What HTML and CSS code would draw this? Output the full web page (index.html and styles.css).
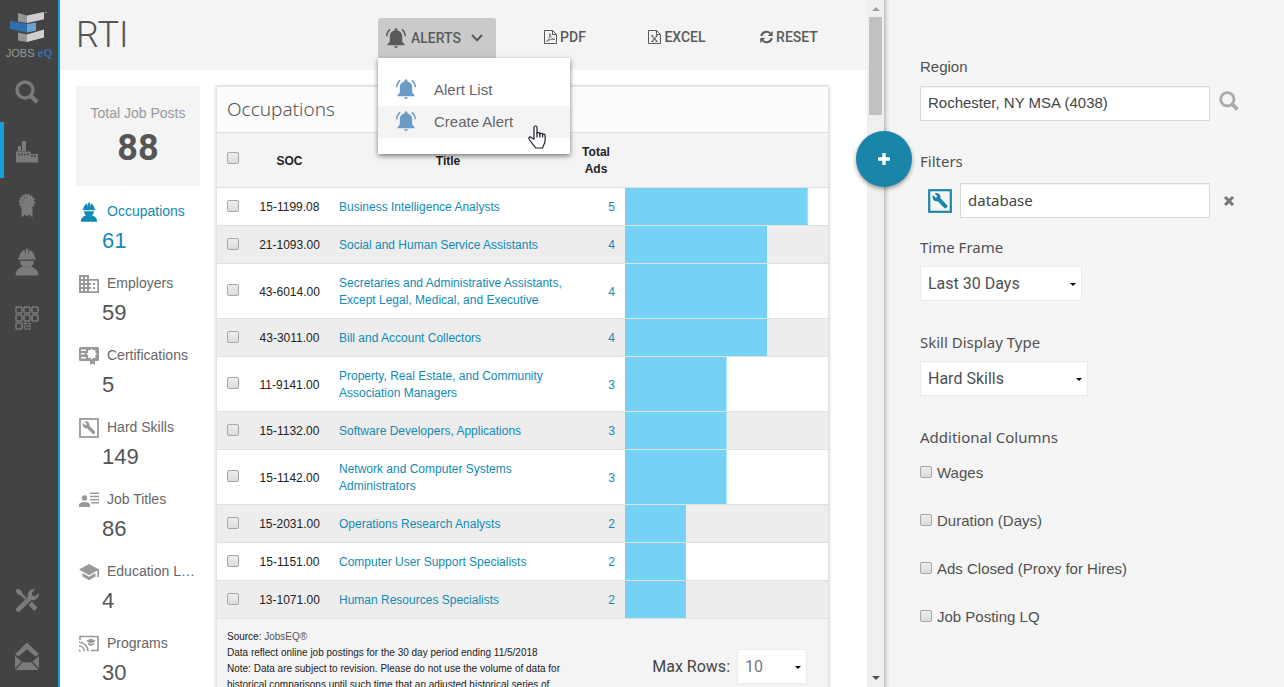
FILE: index.html
```html
<!DOCTYPE html>
<html lang="en">
<head>
<meta charset="utf-8">
<title>RTI</title>
<link rel="stylesheet" href="styles.css">
</head>
<body>
<svg class="defs" aria-hidden="true">
  <symbol id="bell" viewBox="0 0 20 20">
    <path d="M10 .3a1.500 1.500 0 0 1 1.500 1.500v.6c3 .6 4.700 2.900 4.700 5.700v5.400l2.300 2.700v1.100h-17v-1.100l2.300-2.700V8.100c0-2.800 1.700-5.100 4.700-5.700v-.6A1.500 1.500 0 0 1 10 .3zM8 18.300h4c-.2 1-1 1.600-2 1.600s-1.800-.6-2-1.600z" fill="currentColor"/>
    <path d="M4.200 1.300C2 2.900.8 5.500.7 8.300M15.800 1.300c2.200 1.600 3.400 4.200 3.500 7" fill="none" stroke="currentColor" stroke-width="1.500"/>
  </symbol>
  <symbol id="search" viewBox="0 0 24 24">
    <circle cx="10" cy="10" r="8" fill="none" stroke="currentColor" stroke-width="3.400"/>
    <path d="M15.500 15.500l6.700 6.700" stroke="currentColor" stroke-width="4.400"/>
  </symbol>
  <symbol id="worker" viewBox="0 0 24 28">
    <path d="M4 10c.3-4 2.500-7 5.500-8.300L10.300 7 11 .8h2l.7 6.200.8-5.300C17.500 3 19.700 6 20 10h1v1.600H3V10zM5 12.800h14c-.2 4.300-2.800 7-7 7s-6.800-2.700-7-7zM.5 27.500c.3-5 3-7.600 7.300-8.700 2.400 1.600 6 1.600 8.400 0 4.300 1.100 7 3.700 7.300 8.700z" fill="currentColor"/>
  </symbol>
  <symbol id="wrench-box" viewBox="0 0 20 20">
    <rect x="1" y="1" width="18" height="18" fill="none" stroke="currentColor" stroke-width="1.800"/>
    <path d="M4 5l2.500 2.300 1.300-1.200-2.300-2.500c2.800-1 5.600 1.200 4.900 4.200l5.800 5.900c.7.800-1.600 3.100-2.400 2.300L8.100 10.200C5.200 10.900 3 8 4 5z" fill="currentColor"/>
  </symbol>
</svg>

<div class="app">
  <nav class="nav" aria-label="Main">
    <a class="logo" href="#">
      <svg width="58" height="34" viewBox="0 10 58 34" aria-hidden="true">
        <path d="M18 13l9 2.500V23l-9-1.600z" fill="#969696"/><path d="M27 15.500L44 12v7.200L27 23z" fill="#cfcfcf"/>
        <path d="M10 20.700l17 3.300v8.500L10 29z" fill="#2f6fae"/><path d="M27 24l9-1.500v8.300l-9 1.700z" fill="#6a9fcf"/>
        <path d="M18 32.500l9 2V42l-9-1.600z" fill="#969696"/><path d="M27 34.500L44 29.500v8L27 42z" fill="#cfcfcf"/>
        <path d="M45 12h2v1h-2z" fill="#999"/>
      </svg>
      <span class="wordmark">JOBS <b>eQ</b></span>
    </a>
    <a class="nav-item" href="#" aria-label="Search"><svg width="24" height="24"><use href="#search"/></svg></a>
    <a class="nav-item active" href="#" aria-label="Industry">
      <svg width="24" height="24" viewBox="0 0 24 24"><path d="M3 7h3v5H3zM7 2h4v10H7zM1 12.500h14.500V15H23v7.500h.5v1H.5v-1H1z" fill="currentColor"/><path d="M3 15.500h11M16 17h6" stroke="#434343" stroke-width="1.500" stroke-dasharray="2 1"/></svg></a>
    <a class="nav-item" href="#" aria-label="Certification">
      <svg width="24" height="26" viewBox="0 0 24 26"><path d="M6.500 15v9.500l3.500-3 2 2 2-2 3.500 3V15z" fill="currentColor"/><circle cx="12" cy="9" r="7" fill="currentColor" /><circle cx="12" cy="9" r="7.300" fill="none" stroke="currentColor" stroke-width="1.800" stroke-dasharray="2 1.200"/><path d="M7.500 10a4.500 4.500 0 0 1 5-5.500" fill="none" stroke="#555" stroke-width=".8"/></svg></a>
    <a class="nav-item" href="#" aria-label="Occupations"><svg width="24" height="28"><use href="#worker"/></svg></a>
    <a class="nav-item" href="#" aria-label="Programs">
      <svg width="24" height="24" viewBox="0 0 24 24" fill="none" stroke="currentColor" stroke-width="1.500"><rect x="1" y="1" width="6" height="6" rx="1"/><rect x="9" y="1" width="6" height="6" rx="1"/><rect x="17" y="1" width="6" height="6" rx="1"/><rect x="1" y="9" width="6" height="6" rx="1"/><rect x="9" y="9" width="6" height="6" rx="1"/><rect x="17" y="9" width="6" height="6" rx="1"/><rect x="1" y="17" width="6" height="6" rx="1"/><rect x="9.500" y="17.500" width="5.500" height="5.500" stroke-dasharray="2.500 1"/><path d="M11.500 20.200h1.800"/></svg></a>
    <a class="nav-item last" href="#" aria-label="Tools">
      <svg width="24" height="24" viewBox="0 0 24 24"><path d="M.5 2.500l2-2 4 2.200.8 2.800 4.200 4.200-1.800 1.800-4.200-4.200-2.800-.8zM13.500 17l3.300-3.300 5.700 5.800-3.200 3.500zM1 20.500L13 9c-1-4.500 2.500-8.800 7.300-7.800l-3.500 3.500.7 2.800 2.900.7 3.400-3.400c.8 4.500-3 8.300-7.500 7.400L4.300 23.800C3 25-.3 22 1 20.500z" fill="currentColor"/></svg></a>
    <a class="nav-item" href="#" aria-label="Messages">
      <svg width="24" height="28" viewBox="0 0 24 28"><path d="M12 .5l12 11.800-3.500 2.200L12 7.200l-8.500 7.300L0 12.300zM0 14l6.500 5.500L0 26.500zM24 14v12.500l-6.500-7zM7.500 20.300h9L23.500 28H.5z" fill="currentColor"/></svg></a>
  </nav>

  <main class="main">
    <header class="toolbar">
      <h1>RTI</h1>
      <div class="alerts">
        <button class="tool alerts-button" type="button" aria-expanded="true"><svg width="20" height="20"><use href="#bell"/></svg>ALERTS<svg class="chevron" width="12" height="8" viewBox="0 0 12 8"><path d="M1 1l5 5.200L11 1" fill="none" stroke="currentColor" stroke-width="2"/></svg></button>
        <div class="menu">
          <button type="button"><svg width="20" height="20"><use href="#bell"/></svg>Alert List</button>
          <button type="button" class="hover"><svg width="20" height="20"><use href="#bell"/></svg>Create Alert</button>
          <svg class="cursor" width="18" height="24" viewBox="0 0 18 24"><path d="M6 14V2.800c0-2.400 3-2.400 3 0V8.500c.2-1.300 2.600-1.300 2.900.4.400-1.100 2.500-.9 2.700.7.600-.9 2.500-.6 2.500 1.200v5c0 3.400-2 4.100-2.500 7.200H7.500C7 20.500 2.500 17.700 1 13.900c-.6-1.700 1.200-2.600 2.500-1.200z" fill="#fff" stroke="#1c1c2c" stroke-width="1.200"/><path d="M9 8v4.500M11.900 8.500v4M14.600 9.500v3" stroke="#1c1c2c" stroke-width="1.200"/></svg>
        </div>
      </div>
      <div class="tools">
        <button class="tool" type="button"><svg width="13" height="14" viewBox="0 0 13 14" fill="none" stroke="currentColor"><path d="M.5.5h8l4 4v9H.5zM8.500.5v4h4"/><path d="M2.500 11.500C5 10 6 7 5.700 3.500c2 5 3 6 5.300 5.800-3-.3-5.500.200-8.500 2.200z" stroke-width=".8"/></svg>PDF</button>
        <button class="tool" type="button"><svg width="13" height="14" viewBox="0 0 13 14" fill="none" stroke="currentColor"><path d="M.5.500h8l4 4v9H.5zM8.500.5v4h4"/><path d="M4 6l5 5.500M9 6l-5 5.500M3.200 5.800h2M7.800 5.800h2M3.200 11.500h2M7.800 11.500h2" stroke-width="1.100"/></svg>EXCEL</button>
        <button class="tool" type="button"><svg width="13" height="14" viewBox="0 0 13 14"><path d="M1.300 6C2 1.600 7.500.5 10.200 3.400M11.700 8C11 12.400 5.500 13.500 2.800 10.600" fill="none" stroke="currentColor" stroke-width="2"/><path d="M12.700 1v5H7.800zM.3 13V8h4.900z" fill="currentColor"/></svg>RESET</button>
      </div>
    </header>

    <div class="content">
      <aside class="stats">
        <div class="total"><span>Total Job Posts</span><strong>88</strong></div>
        <a class="stat current" href="#"><svg width="20" height="20"><use href="#worker"/></svg><span>Occupations</span><b>61</b></a>
        <a class="stat" href="#"><svg width="20" height="20" viewBox="0 0 20 20"><path fill-rule="evenodd" d="M0 1h10v4h10v14H0zM2 3v2h2V3zM6 3v2h2V3zM2 7v2h2V7zM6 7v2h2V7zM2 11v2h2v-2zM6 11v2h2v-2zM2 15v2h2v-2zM6 15v2h2v-2zM10 6.700V9h2v2h-2v2h2v2h-2v2.300h8.300V6.700zM14 9h2v2h-2zM14 13h2v2h-2z" fill="currentColor"/></svg><span>Employers</span><b>59</b></a>
        <a class="stat" href="#"><svg width="20" height="20" viewBox="0 0 20 20"><path fill-rule="evenodd" d="M1.500 1h17q1.500 0 1.500 1.500v11q0 1.500-1.500 1.500H16v4l-2.500-1.500L11 19v-4H1.500Q0 15 0 13.500v-11Q0 1 1.500 1zM12.700 2.500l-1.500 1.700-2.300-.1.300 2.300L7.500 8l1.700 1.600-.3 2.300 2.300-.1 1.500 1.700 1.500-1.700 2.300.1-.3-2.300L18 8l-1.800-1.600.3-2.300-2.300.1zM2 3.500V5h5V3.500zM2 7v1.500h3.500V7zM2 11v1.500h5V11z" fill="currentColor"/></svg><span>Certifications</span><b>5</b></a>
        <a class="stat" href="#"><svg width="20" height="20"><use href="#wrench-box"/></svg><span>Hard Skills</span><b>149</b></a>
        <a class="stat" href="#"><svg width="20" height="20" viewBox="0 0 20 20"><circle cx="5.500" cy="8" r="2.700" fill="currentColor"/><path d="M0 17v-1.800C0 12.900 2.500 12 5.500 12s5.500.9 5.500 3.200V17zM11 2.500h9V4h-9zM11 5.800h9v1.500h-9zM11 9h9v1.500h-9zM12 12h8v1.500h-8z" fill="currentColor"/></svg><span>Job Titles</span><b>86</b></a>
        <a class="stat" href="#"><svg width="20" height="20" viewBox="0 0 20 20"><path d="M0 7.500L10 2l10 5.500V15h-1.700V8.600L10 13.200zM3.500 11l6.500 3.700 6.500-3.700v3.500L10 18.200l-6.500-3.700z" fill="currentColor"/></svg><span>Education L…</span><b>4</b></a>
        <a class="stat" href="#"><svg width="20" height="20" viewBox="0 0 20 20"><path d="M1 6V2.500h18v14h-7" fill="none" stroke="currentColor" stroke-width="1.600"/><path d="M0 8.300c5 0 9 4 9 9M0 12c3 0 5.300 2.300 5.300 5.300" fill="none" stroke="currentColor" stroke-width="1.500"/><path d="M0 15l2.500 2.500H0zM7 7l5-2.500L17 7l-5 2.500zM9 8.700l3 1.500 3-1.500v1.800L12 12l-3-1.500z" fill="currentColor"/></svg><span>Programs</span><b>30</b></a>
      </aside>

      <section class="card">
        <h2>Occupations</h2>
        <table>
          <colgroup><col class="c-check"><col class="c-soc"><col class="c-title"><col class="c-ads"><col></colgroup>
          <thead><tr><th><input type="checkbox" aria-label="Select all"></th><th>SOC</th><th>Title</th><th>Total Ads</th><th></th></tr></thead>
          <tbody>
            <tr><td><input type="checkbox" aria-label="Select 15-1199.08"></td><td>15-1199.08</td><td><a href="#">Business Intelligence Analysts</a></td><td><a href="#">5</a></td><td class="bar" style="--share:90%"></td></tr>
            <tr><td><input type="checkbox" aria-label="Select 21-1093.00"></td><td>21-1093.00</td><td><a href="#">Social and Human Service Assistants</a></td><td><a href="#">4</a></td><td class="bar" style="--share:70%"></td></tr>
            <tr><td><input type="checkbox" aria-label="Select 43-6014.00"></td><td>43-6014.00</td><td><a href="#">Secretaries and Administrative Assistants, Except Legal, Medical, and Executive</a></td><td><a href="#">4</a></td><td class="bar" style="--share:70%"></td></tr>
            <tr><td><input type="checkbox" aria-label="Select 43-3011.00"></td><td>43-3011.00</td><td><a href="#">Bill and Account Collectors</a></td><td><a href="#">4</a></td><td class="bar" style="--share:70%"></td></tr>
            <tr><td><input type="checkbox" aria-label="Select 11-9141.00"></td><td>11-9141.00</td><td><a href="#">Property, Real Estate, and Community Association Managers</a></td><td><a href="#">3</a></td><td class="bar" style="--share:50%"></td></tr>
            <tr><td><input type="checkbox" aria-label="Select 15-1132.00"></td><td>15-1132.00</td><td><a href="#">Software Developers, Applications</a></td><td><a href="#">3</a></td><td class="bar" style="--share:50%"></td></tr>
            <tr><td><input type="checkbox" aria-label="Select 15-1142.00"></td><td>15-1142.00</td><td><a href="#">Network and Computer Systems<br>Administrators</a></td><td><a href="#">3</a></td><td class="bar" style="--share:50%"></td></tr>
            <tr><td><input type="checkbox" aria-label="Select 15-2031.00"></td><td>15-2031.00</td><td><a href="#">Operations Research Analysts</a></td><td><a href="#">2</a></td><td class="bar" style="--share:30%"></td></tr>
            <tr><td><input type="checkbox" aria-label="Select 15-1151.00"></td><td>15-1151.00</td><td><a href="#">Computer User Support Specialists</a></td><td><a href="#">2</a></td><td class="bar" style="--share:30%"></td></tr>
            <tr><td><input type="checkbox" aria-label="Select 13-1071.00"></td><td>13-1071.00</td><td><a href="#">Human Resources Specialists</a></td><td><a href="#">2</a></td><td class="bar" style="--share:30%"></td></tr>
          </tbody>
        </table>
        <footer class="card-foot">
          <p>Source: <span>JobsEQ®</span><br>Data reflect online job postings for the 30 day period ending 11/5/2018<br>Note: Data are subject to revision. Please do not use the volume of data for historical comparisons until such time that an adjusted historical series of</p>
          <div class="rows"><label for="rows">Max Rows:</label><span class="select"><select id="rows"><option>10</option></select></span></div>
        </footer>
      </section>
    </div>
  </main>

  <div class="scrollbar" aria-hidden="true"><i class="up"></i><i class="thumb"></i><i class="down"></i></div>

  <aside class="panel">
    <button class="fab" type="button" aria-label="Add filter"><svg width="12" height="12" viewBox="0 0 12 12"><path d="M6 0v12M0 6h12" stroke="#fff" stroke-width="3.400"/></svg></button>
    <form class="form">
      <div class="field region">
        <label class="plain" for="region">Region</label>
        <div class="line"><input class="text" id="region" type="text" value="Rochester, NY MSA (4038)"><button class="icon-button find" type="button" aria-label="Find region"><svg width="20" height="20"><use href="#search"/></svg></button></div>
      </div>
      <div class="field filters">
        <label for="filter">Filters</label>
        <div class="line"><svg class="skill" width="24" height="24"><use href="#wrench-box"/></svg><input class="text humanist" id="filter" type="text" value="database"><button class="icon-button remove" type="button" aria-label="Remove filter"><svg width="10" height="10" viewBox="0 0 10 10"><path d="M1 1l8 8M9 1L1 9" stroke="currentColor" stroke-width="3"/></svg></button></div>
      </div>
      <div class="field"><label for="time">Time Frame</label><span class="select time"><select id="time"><option>Last 30 Days</option></select></span></div>
      <div class="field"><label for="skill">Skill Display Type</label><span class="select skilltype"><select id="skill"><option>Hard Skills</option></select></span></div>
      <fieldset>
        <legend>Additional Columns</legend>
        <label><input type="checkbox">Wages</label>
        <label><input type="checkbox">Duration (Days)</label>
        <label><input type="checkbox">Ads Closed (Proxy for Hires)</label>
        <label><input type="checkbox">Job Posting LQ</label>
      </fieldset>
    </form>
  </aside>
</div>
</body>
</html>
```
FILE: styles.css
```css
* { box-sizing: border-box; }
body { margin: 0; font-family: "Liberation Sans", Arial, sans-serif; color: #555; background: #fff; }
a { color: inherit; text-decoration: none; }
button { border: 0; padding: 0; background: none; font: inherit; color: inherit; }
svg { flex: none; }
.defs { position: absolute; width: 0; height: 0; }
.app { display: flex; height: 100vh; overflow: hidden; }

/* Navigation rail */
.nav { display: flex; flex-direction: column; flex: none; width: 60px; padding-bottom: 3px; background: #434343; border-right: 2px solid #169fdb; color: #7b7b7b; }
.logo { display: flex; flex-direction: column; align-items: center; height: 64px; padding-top: 10px; }
.wordmark { font-size: 11px; line-height: 19px; color: #999; }
.wordmark b { color: #2f6fae; }
.nav-item { display: flex; align-items: center; justify-content: center; height: 56px; padding-right: 8px; border-left: 4px solid transparent; }
.nav-item.active { margin-top: 2px; padding-top: 2px; border-left-color: #169fdb; }
.nav-item.last { margin-top: auto; }

/* Main area */
.main { flex: 1; min-width: 0; }
.toolbar { display: flex; align-items: flex-start; height: 70px; padding: 0 28px 0 16px; background: #f4f4f4; }
h1 { flex: 1; margin: 0; font: 300 36px/70px Roboto, sans-serif; color: #555; }
.tool { display: flex; align-items: center; justify-content: center; gap: 3px; width: 100px; height: 40px; font: 500 14px/20px Roboto, sans-serif; color: #5a5a5a; }
.alerts { position: relative; margin: 18px 19px 0 0; }
.alerts-button { justify-content: flex-start; width: 118px; gap: 5px; padding-left: 8px; background: #cacaca; border-radius: 3px 3px 0 0; }
.chevron { margin-left: 5px; }
.tools { display: flex; gap: 12px; padding-top: 17px; }
.menu { position: absolute; z-index: 2; top: 40px; left: 0; width: 192px; padding: 16px 0; background: #fff; box-shadow: 0 2px 5px rgba(0,0,0,.5); }
.menu button { display: flex; align-items: center; gap: 18px; width: 100%; height: 32px; padding: 0 0 2px 18px; font-size: 15px; color: #666; }
.menu button svg { color: #6a9bc5; }
.menu .hover { background: #f4f4f4; }
.cursor { position: absolute; right: 24px; bottom: 5px; }
.content { display: flex; gap: 16px; padding: 16px 38px 0 16px; }

/* Statistics */
.stats { flex: none; width: 124px; }
.total { display: flex; flex-direction: column; align-items: center; height: 100px; padding-top: 17px; margin-bottom: 14px; background: #f4f4f4; font-size: 14px; line-height: 20px; color: #999; }
.total strong { font: 700 36px/50px Roboto, sans-serif; color: #555; }
.stat { display: grid; grid-template-columns: 28px 1fr; height: 72px; padding-left: 3px; color: #666; align-content: start; }
.stat svg { color: #999; margin-top: 2px; }
.stat span { font-size: 14px; line-height: 23px; white-space: nowrap; }
.stat b { grid-column: 1 / 3; padding-left: 23px; font-size: 22px; line-height: 36px; font-weight: 400; color: #555; }
.stat.current, .stat.current svg, .stat.current b { color: #128ab5; }

/* Table card */
.card { flex: 1; min-width: 0; border: 1px solid #e4e4e4; box-shadow: 0 0 3px rgba(0,0,0,.25); background: #f4f4f4; }
h2 { margin: 0; padding: 0 10px; font: 300 19px/45px "Noto Sans", "Open Sans", sans-serif; color: #555; background: #fcfcfc; border-bottom: 1px solid #e0e0e0; }
table { width: 100%; border-collapse: separate; border-spacing: 0; table-layout: fixed; font-size: 12px; line-height: 17px; color: #222; }
.c-check { width: 33px; }
.c-soc { width: 79px; }
.c-title { width: 238px; }
.c-ads { width: 58px; }
th, td { padding: 11px 10px 9px; text-align: left; border-bottom: 1px solid #e0e0e0; }
th { text-align: center; }
th:first-child { padding-bottom: 15px; }
td:first-child { padding: 9px 10px 11px; }
td:nth-child(2) { padding-left: 0; padding-right: 0; text-align: center; }
td:nth-child(3) { padding-right: 0; }
td:nth-child(4) { text-align: right; }
td a { color: #128ab5; }
tbody tr { background: #fff; }
tbody tr:nth-child(even) { background: #ededed; }
.bar { padding: 0; background: linear-gradient(#74d2f4, #74d2f4) no-repeat 0 0 / var(--share) 100%; background-clip: padding-box; }
input[type="checkbox"] { appearance: none; display: block; flex: none; width: 12px; height: 12px; margin: 0; border: 1px solid #a6a6a6; border-radius: 2px; background: linear-gradient(#eee, #dcdcdc); }
.card-foot { display: flex; justify-content: space-between; padding: 10px 21px 0 10px; }
.card-foot p { margin: 0; width: 345px; font-size: 10px; line-height: 16px; color: #222; }
.card-foot p span { color: #555; }
.rows { display: flex; align-items: center; gap: 7px; height: 35px; margin-top: 20px; font: 400 16px/20px Roboto, sans-serif; color: #444; }
.rows .select { width: 70px; }
.rows select { color: #777; }

.select { position: relative; display: block; height: 35px; }
.select::after { content: ""; position: absolute; right: 6px; top: 17px; border: 3px solid transparent; border-top-color: #000; border-bottom: 0; pointer-events: none; }
select { appearance: none; width: 100%; height: 100%; padding: 0 7px; border: 1px solid #ebebeb; border-radius: 0; background: #fff; font: 400 16px/20px Roboto, sans-serif; color: #505050; }

/* Scrollbar */
.scrollbar { display: flex; flex-direction: column; align-items: center; flex: none; width: 17px; padding: 7px 0; background: #f0f0f0; }
.scrollbar .up { border: 4px solid transparent; border-bottom-color: #a0a0a0; border-top: 0; }
.scrollbar .thumb { width: 13px; height: 98px; margin-top: 6px; background: #c1c1c1; }
.scrollbar .down { margin-top: auto; border: 4px solid transparent; border-top-color: #505050; border-bottom: 0; }

/* Filter panel */
.panel { position: relative; flex: none; width: 400px; background: linear-gradient(90deg, #bdbdbd, #e4e4e4 3px, #f5f5f5 6px); }
.fab { position: absolute; left: -28px; top: 131px; display: flex; align-items: center; justify-content: center; width: 56px; height: 56px; border-radius: 50%; background: #1985a9; box-shadow: 0 2px 4px rgba(0,0,0,.4); }
.form { padding: 57px 36px 0; color: #505050; }
.field { margin-bottom: 31px; }
.field.region { margin-bottom: 30px; }
.field.filters { margin-bottom: 19px; }
.field > label, legend { display: block; padding: 0; margin-bottom: 9px; font: 400 15px/20px "Noto Sans", "Open Sans", sans-serif; }
.field > label.plain { font-family: "Liberation Sans", Arial, sans-serif; }
.field.filters > label { margin-bottom: 12px; }
.line { display: flex; align-items: center; }
.text { flex: 1; min-width: 0; height: 35px; padding: 0 7px 2px; border: 1px solid #d8d8d8; border-radius: 0; background: #fff; font: 400 15px/20px "Liberation Sans", Arial, sans-serif; color: #444; box-shadow: inset 0 1px 1px rgba(0,0,0,.05); }
.text.humanist { font-family: "Noto Sans", "Open Sans", sans-serif; }
.skill { margin: 0 8px; color: #1985a9; }
.icon-button { display: flex; justify-content: center; width: 38px; color: #aaa; }
.icon-button.find { padding-bottom: 5px; }
.icon-button.remove { color: #777; }
.time { width: 162px; }
.skilltype { width: 168px; }
fieldset { margin: 0; padding: 0; border: 0; }
legend { margin-bottom: 16px; }
fieldset label { display: flex; align-items: center; gap: 5px; height: 20px; margin-bottom: 28px; font-size: 15px; line-height: 20px; }
fieldset input[type="checkbox"] { margin-bottom: 3px; }
```
